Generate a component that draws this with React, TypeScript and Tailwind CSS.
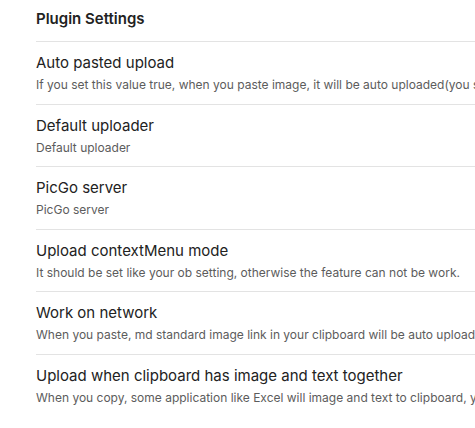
const settings = [
  {
    name: "Auto pasted upload",
    desc: "If you set this value true, when you paste image, it will be auto uploaded(you should set the picGo server rightly)",
  },
  { name: "Default uploader", desc: "Default uploader" },
  { name: "PicGo server", desc: "PicGo server" },
  {
    name: "Upload contextMenu mode",
    desc: "It should be set like your ob setting, otherwise the feature can not be work.",
  },
  {
    name: "Work on network",
    desc: "When you paste, md standard image link in your clipboard will be auto upload.",
  },
  {
    name: "Upload when clipboard has image and text together",
    desc: "When you copy, some application like Excel will image and text to clipboard, you can upload or not.",
  },
];

function SettingItem({ name, desc }: { name: string; desc: string }) {
  return (
    <div className="flex flex-col border-t border-[#e3e3e3] pt-[11px] pb-[10.6px]">
      <div className="text-[15px] leading-[20px] text-[#222222]">{name}</div>
      <div className="mt-[4px] text-[12px] leading-[16px] text-[#5c5c5c]">{desc}</div>
    </div>
  );
}

export default function App() {
  return (
    <div className="w-[475px] h-[428px] overflow-hidden bg-white font-['Inter','Liberation_Sans',sans-serif] antialiased">
      <div className="pl-[36px] w-[900px] whitespace-nowrap">
        {/* Heading */}
        <div className="pt-[8.5px] pb-[12.5px] text-[15px] leading-[20px] font-semibold text-[#222222]">
          Plugin Settings
        </div>
        {/* Settings list */}
        <div className="flex flex-col">
          {settings.map((s) => (
            <SettingItem key={s.name} name={s.name} desc={s.desc} />
          ))}
        </div>
      </div>
    </div>
  );
}
